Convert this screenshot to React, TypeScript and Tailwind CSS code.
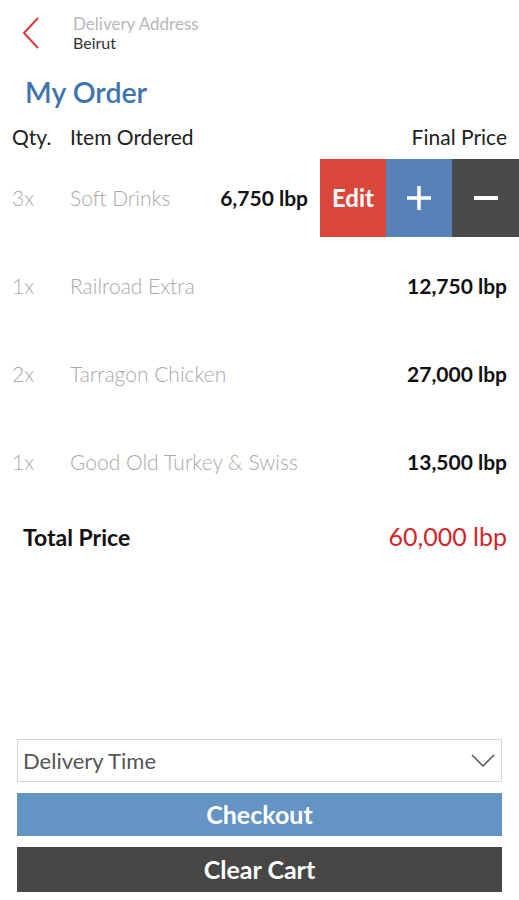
import React from "react";

const items = [
  { qty: "3x", name: "Soft Drinks", price: "6,750 lbp", active: true },
  { qty: "1x", name: "Railroad Extra", price: "12,750 lbp" },
  { qty: "2x", name: "Tarragon Chicken", price: "27,000 lbp" },
  { qty: "1x", name: "Good Old Turkey & Swiss", price: "13,500 lbp" },
];

export default function App() {
  return (
    <div
      className="h-[900px] w-[519px] bg-white flex flex-col overflow-hidden"
      style={{ fontFamily: "Lato, 'Noto Sans', sans-serif" }}
    >
      {/* Top bar */}
      <div className="h-[64px] flex items-center pt-[2px]">
        <div className="w-[73px] flex items-center pl-[22px]">
          <svg width="18" height="32" viewBox="0 0 18 32" fill="none">
            <path d="M16 1 L2 16 L16 31" stroke="#d93a37" strokeWidth="2" />
          </svg>
        </div>
        <div className="flex flex-col leading-none">
          <span className="text-[17px] text-[#b8b8b8]">Delivery Address</span>
          <span className="text-[16px] text-[#333] mt-[3px]">Beirut</span>
        </div>
      </div>

      {/* Title */}
      <div className="h-[56px] flex items-center pl-[25px]">
        <span className="text-[28.5px] font-semibold text-[#3f75ae]">My Order</span>
      </div>

      {/* Header row */}
      <div className="h-[34px] flex items-center text-[21px] text-[#222]">
        <span className="w-[70px] pl-[12px]">Qty.</span>
        <span className="flex-1">Item Ordered</span>
        <span className="pr-[12px]">Final Price</span>
      </div>

      {/* Items */}
      {items.map((it) => (
        <div key={it.name} className="h-[88px] flex items-center">
          <span className="w-[70px] pl-[12px] text-[21px] font-light text-[#aaa]">{it.qty}</span>
          <span className="flex-1 text-[21px] font-light text-[#a8a8a8]">{it.name}</span>
          {it.active ? (
            <>
              <span className="text-[21px] font-bold text-[#111] pr-[12px]">{it.price}</span>
              <div className="flex h-[78px]">
                <div className="w-[66px] bg-[#d9473b] flex items-center justify-center text-white text-[24px] font-bold">
                  Edit
                </div>
                <div className="w-[66px] bg-[#5682b7] flex items-center justify-center">
                  <svg width="26" height="26" viewBox="0 0 26 26">
                    <path d="M13 1 V25 M1 13 H25" stroke="white" strokeWidth="3.5" />
                  </svg>
                </div>
                <div className="w-[67px] bg-[#4a4a4a] flex items-center justify-center">
                  <svg width="26" height="26" viewBox="0 0 26 26">
                    <path d="M1 13 H25" stroke="white" strokeWidth="4" />
                  </svg>
                </div>
              </div>
            </>
          ) : (
            <span className="text-[21px] font-bold text-[#111] pr-[12px]">{it.price}</span>
          )}
        </div>
      ))}

      {/* Total */}
      <div className="h-[62px] flex items-center justify-between pl-[23px] pr-[12px]">
        <span className="text-[23px] font-bold text-[#111]">Total Price</span>
        <span className="text-[25px] text-[#d0262a]">60,000 lbp</span>
      </div>

      <div className="flex-1" />

      {/* Bottom controls */}
      <div className="flex flex-col px-[17px] pb-[8px] gap-[11px]">
        <div className="h-[43px] border border-[#d6d6d6] flex items-center justify-between pl-[5px] pr-[6px]">
          <span className="text-[22px] text-[#555] leading-none">Delivery Time</span>
          <svg width="24" height="14" viewBox="0 0 24 14" fill="none">
            <path d="M1 1 L12 12 L23 1" stroke="#555" strokeWidth="1.5" />
          </svg>
        </div>
        <div className="h-[43px] bg-[#6494c4] flex items-center justify-center text-white text-[25px] font-bold">
          Checkout
        </div>
        <div className="h-[45px] bg-[#474747] flex items-center justify-center text-white text-[25px] font-bold">
          Clear Cart
        </div>
      </div>
    </div>
  );
}
